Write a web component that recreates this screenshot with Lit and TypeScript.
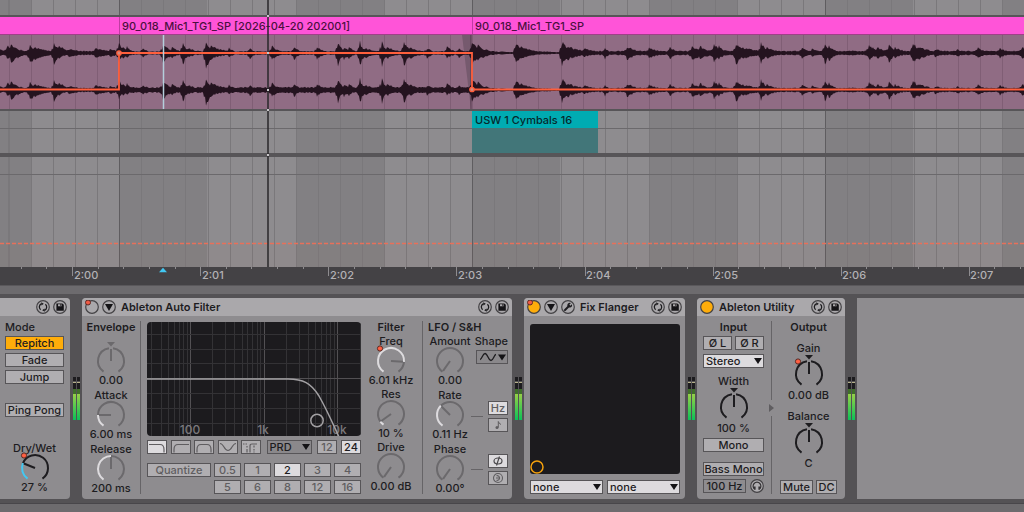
import { LitElement, html, svg, css, nothing } from "lit";
import { customElement, property } from "lit/decorators.js";
import { classMap } from "lit/directives/class-map.js";

/** Point on a circle; 0 degrees is straight up, clockwise. */
const polar = (cx: number, cy: number, r: number, deg: number) => {
  const a = ((deg - 90) * Math.PI) / 180;
  return [cx + r * Math.cos(a), cy + r * Math.sin(a)].map((n) => n.toFixed(2));
};

const arc = (cx: number, cy: number, r: number, from: number, to: number) => {
  const [x1, y1] = polar(cx, cy, r, from);
  const [x2, y2] = polar(cx, cy, r, to);
  return `M${x1} ${y1}A${r} ${r} 0 ${to - from > 180 ? 1 : 0} 1 ${x2} ${y2}`;
};

@customElement("dial-knob")
class DialKnob extends LitElement {
  @property() label = "";
  @property() text = "";
  @property() accent = "#dddbde";
  /** Needle angle from -145 to 145. */
  @property({ type: Number }) angle = 0;
  @property({ type: Boolean }) bipolar = false;
  @property({ type: Boolean }) active = false;
  @property({ type: Boolean }) mapped = false;
  @property({ type: Boolean }) hidelabel = false;

  static styles = css`
    :host {
      display: flex;
      flex-direction: column;
      align-items: center;
      line-height: 14px;
      white-space: nowrap;
    }
    .dial {
      position: relative;
      display: flex;
    }
    svg {
      display: block;
      overflow: visible;
    }
    input {
      position: absolute;
      inset: 0;
      width: 100%;
      height: 100%;
      margin: 0;
      opacity: 0;
    }
    .value {
      display: block;
    }
    .spaced {
      padding-top: 2px;
    }
    .bare {
      padding-top: 8px;
    }
  `;

  render() {
    const cy = this.bipolar ? 19 : 13;
    const h = this.bipolar ? 31 : 25;
    const color = this.active ? "#1d1c1f" : "#6b696c";
    const [nx, ny] = polar(15, cy, 12, this.angle);
    return html`
      ${this.hidelabel ? nothing : html`<label for="dial">${this.label}</label>`}
      <div class=${classMap({ dial: true, bare: this.hidelabel })}>
        <svg width="30" height=${h} viewBox="0 0 30 ${h}" fill="none" stroke-width="2">
          ${this.bipolar
            ? svg`<path d="M11 0h8l-4 4.500z" fill=${color} />
                <path d=${arc(15, cy, 13, -145, -9)} stroke=${color} />
                <path d=${arc(15, cy, 13, 9, 145)} stroke=${color} />`
            : svg`<path d=${arc(15, cy, 13, this.angle, 145)} stroke=${color} />
                ${this.angle > -145
                  ? svg`<path d=${arc(15, cy, 13, -145, this.angle)} stroke=${this.accent} />`
                  : nothing}`}
          <path d="M15 ${cy}L${nx} ${ny}" stroke=${color} />
          ${this.mapped
            ? svg`<circle cx="4" cy=${cy - 12.5} r="2.600" fill="#ff5f42" stroke="#5a2a24" stroke-width="1" />`
            : nothing}
        </svg>
        <input id="dial" type="range" min="-145" max="145" .value=${String(this.angle)} aria-label=${this.label} />
      </div>
      <span class=${classMap({ value: true, spaced: this.bipolar && !this.hidelabel })}>${this.text}</span>
    `;
  }
}

/* ---------- icons ---------- */
const swapIcon = svg`<circle cx="7" cy="7" r="6.300" fill="none" stroke="#444245" stroke-width="1.200"/>
  <g fill="none" stroke="#1d1c1f" stroke-width="1.300"><path d="M4.600 9.800A3.600 3.600 0 0 1 5.600 3.700"/><path d="M9.400 4.200A3.600 3.600 0 0 1 8.400 10.300"/></g>
  <path d="M5.200 2.300l2.600 1.400-2.300 1.800zM8.800 11.700L6.200 10.300l2.300-1.800z" fill="#1d1c1f"/>`;
const saveIcon = svg`<circle cx="7" cy="7" r="6.300" fill="none" stroke="#444245" stroke-width="1.200"/>
  <path d="M3.400 3.400h6l1.400 1.400v6H3.400z" fill="#141316"/><path d="M5 4.200h3.600v2H5z" fill="#aaa8ab"/><path d="M7.200 4.200h1v1.500h-1z" fill="#141316"/>`;
const foldIcon = svg`<circle cx="7" cy="7" r="6.300" fill="none" stroke="#444245" stroke-width="1.200"/>
  <path d="M3 4h8L7 11z" fill="#141316"/>`;
const wrenchIcon = svg`<circle cx="7" cy="7" r="6.300" fill="none" stroke="#444245" stroke-width="1.200"/>
  <path d="M4 10L8 6" stroke="#1d1c1f" stroke-width="2" stroke-linecap="round"/>
  <path d="M9.900 3.100L8.300 4.700l1 1 1.600-1.500a2.400 2.400 0 1 1-1-1.100z" fill="#1d1c1f"/>`;
const headIcon = svg`<circle cx="7" cy="7" r="6.300" fill="#b0aeb1" stroke="#444245" stroke-width="1.200"/>
  <path d="M4.800 10.300A3.900 3.900 0 1 1 9.200 10.300" fill="none" stroke="#333134" stroke-width="1.200"/>
  <path d="M3.600 7.500h2v3.200h-1.200zM10.400 7.500h-2v3.200h1.200z" fill="#333134"/>`;

const icon = (name: string, shape: unknown) => html`
  <button class="round" aria-label=${name}><svg width="14" height="14" viewBox="0 0 14 14">${shape}</svg></button>
`;

/* ---------- timeline data ---------- */
const BEAT = 88.25;
const BAR_START = 119.3;
const TIMES = ["2:00", "2:01", "2:02", "2:03", "2:04", "2:05", "2:06", "2:07"];

/** Transients: x, height above the centre, depth below it, decay length. */
const HITS: number[][] = [
  [-2, 3, 2, 8], [7, 7, 5, 7], [11, 7, 9, 8], [30, 7, 11, 6], [34, 5, 6, 12], [54, 8, 10, 5], [59, 6, 4, 8], [69, 3, 3, 10], [95, 4, 4, 12], [110, 3, 3, 8],
  [119, 11, 9, 3], [123, 6, 5, 4], [127, 6, 4, 3], [143, 4, 3, 3], [163, 7, 8, 7], [172, 5, 4, 6], [183, 9, 11, 3], [188, 4, 3, 8],
  [206, 9, 15, 5], [211, 6, 5, 12], [229, 4, 3, 4], [250, 4, 6, 3], [272, 6, 6, 5], [294, 6, 6, 4], [317, 5, 5, 5],
  [338, 9, 11, 4], [344, 5, 6, 6], [349, 6, 5, 4], [360, 10, 13, 3], [365, 4, 4, 8], [382, 11, 13, 3], [387, 6, 5, 7], [404, 11, 12, 4],
  [410, 5, 5, 7], [427, 4, 4, 4], [447, 5, 4, 6], [459, 4, 4, 3],
  [472, 10, 10, 7], [478, 7, 7, 7], [516, 10, 10, 6], [521, 6, 5, 9], [562, 10, 11, 7], [568, 6, 6, 12], [584, 4, 3, 8], [605, 4, 5, 3],
  [627, 6, 6, 8], [649, 4, 4, 8], [670, 5, 5, 5], [692, 6, 7, 9], [700, 6, 6, 8], [714, 8, 8, 6], [719, 7, 6, 4],
  [736, 9, 11, 6], [742, 5, 5, 14], [761, 9, 9, 5], [767, 5, 5, 8], [802, 4, 4, 5], [812, 4, 3, 5],
  [825, 10, 11, 3], [829, 6, 7, 5], [869, 7, 6, 7], [877, 5, 5, 7], [889, 9, 10, 4], [895, 5, 4, 7], [913, 10, 10, 6], [919, 5, 5, 10],
  [935, 3, 3, 10], [957, 3, 3, 5], [978, 5, 5, 5], [1000, 4, 4, 6], [1022, 5, 5, 8],
];

const noise = (n: number) => {
  const v = Math.sin(n * 127.1) * 43758.5453;
  return v - Math.floor(v);
};

const wavePath = (cy: number, seed: number, floor: number) => {
  const side = (col: number, sign: number) => {
    const points: string[] = [];
    for (let x = 0; x <= 1026; x += 1) {
      let a = x > 472 && x < 560 ? 1 : x > 119 && x < 472 ? floor : 2;
      for (const hit of HITS) {
        const d = x - hit[0];
        if (d >= -2 && d < hit[3] * 4) a = Math.max(a, 1 + hit[col] * (d < 0 ? 0.4 : Math.exp(-d / hit[3])));
      }
      const grain = a > 3 ? 0.75 + 0.4 * noise(x + seed * col) : 0.7 + 0.5 * noise(x + seed);
      points.push(`${x} ${(cy + sign * a * grain).toFixed(1)}`);
    }
    return points;
  };
  return `M${side(1, -1).join("L")}L${side(2, 1).reverse().join("L")}Z`;
};

const WAVES = wavePath(18, 3, 1.7) + wavePath(55, 3, 2.7);

@customElement("app-root")
class AppRoot extends LitElement {
  static styles = css`
    :host {
      display: block;
      font-family: Inter, "Open Sans", sans-serif;
      font-size: 11px;
      font-weight: 500;
      line-height: 14px;
      color: #1d1c1f;
      --edge: #575558;
      --panel: #8e8c8f;
      --key: #b0aeb1;
    }
    * {
      box-sizing: border-box;
    }
    main {
      display: flex;
      flex-direction: column;
      min-height: 100vh;
      overflow: hidden;
      background: #6d6b6e;
    }
    svg {
      display: block;
    }
    h2,
    h3 {
      margin: 0;
      font-size: 11px;
      font-weight: 600;
      white-space: nowrap;
    }

    /* arrangement */
    .arrange {
      position: relative;
      overflow: hidden;
      background: #8e8c8f;
    }
    .beats,
    .cursor {
      position: absolute;
      inset: 0;
      width: 100%;
      height: 100%;
    }
    .track {
      position: relative;
      border-bottom: 2px solid var(--edge);
    }
    .strip {
      height: 17px;
    }
    .clips {
      display: grid;
      grid-template-columns: 119px 353px 1fr;
      height: 18px;
      border-bottom: 1px solid #a04088;
    }
    .clip {
      padding: 1px 3px;
      overflow: hidden;
      background: #ff54d8;
      color: #4b103e;
      line-height: 16px;
      white-space: nowrap;
    }
    .clip + .clip {
      border-left: 1px solid #c03ca2;
      padding-left: 2px;
    }
    .wave {
      height: 74px;
      overflow: hidden;
      background: #906c84;
    }
    .midi {
      display: grid;
      grid-template-columns: 472px 126px 1fr;
      height: 46px;
      border-bottom-width: 4px;
    }
    .cymbals {
      background: #427679;
    }
    .cymbals h3 {
      height: 17px;
      padding-left: 3px;
      background: #00abb2;
      color: #06292c;
      font-weight: 500;
      line-height: 18px;
    }
    .lane {
      height: 110px;
      border: 0;
    }
    .ruler {
      position: relative;
      height: 19px;
      background: #444245;
      border-bottom: 1px solid #5a585b;
    }
    .ticks {
      position: absolute;
      inset: 0;
      width: 100%;
      height: 100%;
    }
    .times {
      display: grid;
      grid-auto-flow: column;
      grid-auto-columns: 128px;
      margin: 0;
      padding: 1px 0 0 74px;
      list-style: none;
      color: #b3b1b4;
      line-height: 15px;
    }

    /* device chain */
    .rack {
      display: flex;
      margin-top: 8px;
      padding: 4px 0;
      background: #545255;
      border-bottom: 1px solid #48464a;
    }
    .device {
      display: flex;
      flex-direction: column;
      flex: none;
      overflow: hidden;
      border-radius: 4px;
      background: var(--panel);
    }
    .echo {
      width: 70px;
      border-top-left-radius: 0;
      border-bottom-left-radius: 0;
    }
    .filter {
      width: 430px;
    }
    .flanger {
      width: 161px;
    }
    .utility {
      width: 148px;
    }
    .empty {
      flex: 1;
      background: var(--panel);
    }
    .bar {
      display: flex;
      align-items: center;
      gap: 3px;
      height: 18px;
      padding: 0 3px;
      background: #aaa8ab;
    }
    .bar h2 {
      flex: 1;
      padding-left: 2px;
    }
    button,
    select {
      margin: 0;
      font: inherit;
      color: inherit;
    }
    .round {
      display: block;
      width: 14px;
      height: 14px;
      padding: 0;
      border: 0;
      background: none;
    }
    .body {
      display: flex;
      flex: 1;
      min-height: 183px;
    }
    .key {
      display: flex;
      align-items: center;
      justify-content: center;
      height: 14px;
      padding: 0;
      border: 1px solid var(--edge);
      background: var(--key);
      line-height: 12px;
      white-space: nowrap;
    }
    .lit {
      background: #ffad0a;
    }
    .on {
      background: #dddbde;
    }
    .dim {
      color: #5f5d60;
    }
    .dark {
      background: #8e8c8f;
    }
    .pick {
      position: relative;
      display: flex;
    }
    .pick select {
      width: 100%;
      height: 14px;
      padding: 0 2px;
      appearance: none;
      border: 1px solid var(--edge);
      border-radius: 0;
      background: #dddbde;
      line-height: 12px;
    }
    .pick svg {
      position: absolute;
      top: 4px;
      right: 2px;
      pointer-events: none;
    }
    .pick .shade {
      background: #8a888b;
    }
    .pick .wide {
      right: 2px;
      top: 1px;
    }
    .pick .blank {
      color: transparent;
    }
    .rule {
      flex: none;
      width: 1px;
      margin: 5px 0;
      background: #666467;
    }
    .echo .body {
      flex-direction: column;
      padding: 4px 6px 5px 5px;
    }
    .modes {
      display: grid;
      gap: 3px;
      padding-bottom: 19px;
    }
    .modes span {
      margin-bottom: -1px;
    }
    .grow {
      flex: 1;
    }
    .meter {
      display: flex;
      flex: none;
      gap: 1px;
      justify-content: center;
      align-items: flex-start;
      width: 12px;
      padding-top: 79px;
    }
    .meter i {
      width: 3px;
      height: 43px;
      background: linear-gradient(#1d1c1f 0 4px, #545255 4px 5px, #b5b08a 5px 6px, #1d1c1f 6px 12px, #3f6f2a 12px 17px, #97d048 17px, #0cc257 43px);
    }
    .stack {
      display: flex;
      flex-direction: column;
      padding-top: 4px;
      text-align: center;
    }
    .env {
      width: 58px;
      gap: 1px;
    }
    .env h3 {
      margin-bottom: -1px;
    }
    .spectrum {
      display: flex;
      flex-direction: column;
      width: 226px;
      padding: 6px 6px 5px;
    }
    .graph {
      width: 214px;
      height: 114px;
      margin-bottom: 4px;
      border-radius: 4px;
      background: #1c1b1e;
    }
    .types {
      display: flex;
      justify-content: space-between;
      margin-bottom: 9px;
    }
    .group {
      display: flex;
      justify-content: space-between;
    }
    .five {
      width: 114px;
    }
    .two {
      width: 44px;
    }
    .group .key {
      width: 20px;
    }
    .circuit {
      width: 45px;
    }
    .steps {
      display: grid;
      grid-template-columns: 64px repeat(5, 27px);
      gap: 3px;
    }
    .six {
      grid-column: 2;
    }
    .main {
      width: 55px;
      padding-right: 7px;
    }
    .lfo {
      flex: 1;
      padding: 4px 4px 0 5px;
    }
    .lfo h3 {
      text-align: left;
    }
    .split {
      display: grid;
      grid-template-columns: 44px 32px;
      justify-content: space-between;
    }
    .dials {
      display: grid;
      gap: 1px;
    }
    .side {
      display: flex;
      flex-direction: column;
      align-items: flex-end;
    }
    .side .pick {
      width: 32px;
      margin: 2px 0 37px;
    }
    .pair {
      display: grid;
      grid-template-columns: 12px 20px;
      column-gap: 5px;
      align-items: center;
      row-gap: 3px;
      margin-bottom: 22px;
    }
    .pair:last-child {
      margin-bottom: 0;
    }
    .dash {
      grid-row: 1 / 3;
      height: 1px;
      background: #666467;
    }
    .pair .key {
      grid-column: 2;
    }
    .flanger .body {
      flex-direction: column;
      gap: 6px;
      padding: 8px 5px 5px 6px;
    }
    .pad {
      height: 150px;
      border-radius: 3px;
      background: #1c1b1e;
    }
    .drops {
      display: grid;
      grid-template-columns: 1fr 1fr;
      gap: 4px;
    }
    .input {
      width: 72px;
      padding: 4px 5px 5px 6px;
    }
    .flip {
      display: grid;
      grid-template-columns: 1fr 1fr;
      gap: 3px;
      margin: 2px 0 4px;
    }
    .input .pick {
      margin-bottom: 6px;
    }
    .mono {
      margin-top: 3px;
      margin-bottom: 10px;
    }
    .bass {
      display: grid;
      grid-template-columns: 43px 14px;
      justify-content: space-between;
      margin-top: 3px;
    }
    .flow {
      display: flex;
      flex-direction: column;
      align-items: center;
      width: 5px;
      margin: 5px 0;
    }
    .flow span {
      flex: 1;
      width: 1px;
      background: #666467;
    }
    .flow svg {
      margin: 4px 0;
    }
    .output {
      flex: 1;
      padding: 4px 8px 5px 6px;
    }
    .output dial-knob {
      margin-top: 7px;
    }
    .ends {
      display: grid;
      grid-template-columns: 33px 21px;
      justify-content: space-between;
    }
  `;

  private beats() {
    const lines = [];
    for (let i = -6; i < 120; i++) {
      const x = Math.round(BAR_START + (i * BEAT) / 4);
      const strong = i % 16 === 0;
      if (i % 8 === 0)
        lines.push(svg`<rect x=${x} width=${Math.round(BEAT)} height="100%" fill="#828083" />`);
      lines.push(svg`<rect x=${x} width="1" height="100%" fill=${strong ? "#5f5d60" : "#7a787b"} />`);
    }
    return svg`<rect width="31" height="100%" fill="#828083" /><rect x="8" width="1" height="100%" fill="#7a787b" />${lines}
      <path d="M0 128.500H4000M0 174.500H4000" stroke="#6b696c" />
      <rect y="244" width="100%" height="23" fill="#b05040" opacity=".03" />
      <path d="M0 243.500H4000" stroke="#e8705a" stroke-width="1.400" stroke-dasharray="4 2" />`;
  }

  private ticks() {
    const marks = [];
    for (let i = -2; i < 120; i++) {
      const x = Math.round(72.1 + i * 25.62);
      marks.push(svg`<rect x=${x} width="1" height=${i % 5 === 0 ? 9 : 2} fill="#8e8c8f" />`);
    }
    return marks;
  }

  private waveLines() {
    const x: unknown[] = [];
    for (let i = -5; i < 120; i++) {
      const at = Math.round(BAR_START + (i * BEAT) / 4);
      x.push(svg`<rect x=${at} width="1" height="74" fill="#805e75" />`);
    }
    return x;
  }

  private graph() {
    const lines = [];
    for (let decade = 1; decade < 5; decade++)
      for (let n = 1; n < 10; n++) {
        const x = Math.round(43 + (decade + Math.log10(n) - 2) * 73.7);
        if (x > 0 && x < 214)
          lines.push(svg`<path d="M${x + 0.5} 0V114" stroke=${n === 1 ? "#525053" : "#333235"} />`);
      }
    return svg`${lines}
      <path d="M0 12.500H214M0 27.500H214M0 41.500H214M0 71.500H214M0 86.500H214M0 101.500H214" stroke="#333235" />
      <path d="M0 56.500H214" stroke="#525053" />
      <g fill="#7b797c" font-size="12" text-anchor="middle"><text x="43" y="112">100</text><text x="116" y="112">1k</text><text x="190" y="112">10k</text></g>
      <path d="M0 57H141C156 57 164 61 172 74C180 88 186 102 192 115" fill="none" stroke="#a3a1a4" stroke-width="1.500" />
      <circle cx="170" cy="98.500" r="6.200" fill="none" stroke="#a3a1a4" stroke-width="1.500" />`;
  }

  private bar(title: string, opts: { power?: string; mapped?: boolean; fold?: boolean; wrench?: boolean }) {
    return html`<header class="bar">
      ${opts.power
        ? icon("Device on", svg`<circle cx="7" cy="7" r="6.300" fill=${opts.power} stroke="#444245" stroke-width="1.200" />
            ${opts.mapped ? svg`<circle cx="3" cy="2.500" r="2.500" fill="#f05a44" stroke="#5a2a24" />` : nothing}`)
        : nothing}
      ${opts.fold ? icon("Fold", foldIcon) : nothing} ${opts.wrench ? icon("Edit", wrenchIcon) : nothing}
      <h2>${title}</h2>
      ${icon("Hot-swap", swapIcon)} ${icon("Save preset", saveIcon)}
    </header>`;
  }

  private key(text: unknown, cls = "", name = "") {
    return html`<button class="key ${cls}" aria-label=${name || nothing}>${text}</button>`;
  }

  private pick(name: string, value: string, cls = "") {
    return html`<div class="pick">
      <select class=${cls} aria-label=${name}><option>${value}</option></select>
      <svg width="8" height="6" viewBox="0 0 8 6"><path d="M0 0h8L4 6z" fill="#141316" /></svg>
    </div>`;
  }

  private glyph(d: string) {
    return html`<svg width="18" height="12" viewBox="0 0 18 12" fill="none" stroke="#5f5d60" stroke-width="1.200"><path d=${d} /></svg>`;
  }

  private meter() {
    return html`<div class="meter"><i></i><i></i></div>`;
  }

  render() {
    return html`<main>
      <section class="arrange">
        <svg class="beats">${this.beats()}</svg>
        <div class="track strip"></div>
        <div class="track">
          <div class="clips">
            <div class="clip"></div>
            <div class="clip">90_018_Mic1_TG1_SP [2026-04-20 202001]</div>
            <div class="clip">90_018_Mic1_TG1_SP</div>
          </div>
          <div class="wave">
            <svg width="100%" height="74">
              ${this.waveLines()}
              <path d="M462 0h9v74z" fill="#765a6e" />
              <path d="M119.500 0V74M471 0V74" stroke="#54384c" />
              <path d=${WAVES} fill="#24131f" />
              <path d="M0 54.500H119V18H472V54.500H4000" fill="none" stroke="#ff5f3c" stroke-width="1.800" />
              <circle cx="119" cy="18" r="2.200" fill="#d08a80" stroke="#ff5f3c" stroke-width="1.300" />
              <circle cx="472" cy="54.500" r="2.200" fill="#d08a80" stroke="#ff5f3c" stroke-width="1.300" />
              <path d="M163.500 0V74" stroke="#b4cfdc" stroke-width="1.500" />
            </svg>
          </div>
        </div>
        <div class="track midi">
          <span></span>
          <div class="cymbals"><h3>USW 1 Cymbals 16</h3></div>
        </div>
        <div class="track lane"></div>
        <svg class="cursor">
          <path d="M268 0V267" stroke="#29272a" stroke-width="1.500" />
          <path d="M267 15h2v2h-2zM267 52h2v2h-2zM267 89h2v2h-2zM267 109h2v2h-2zM267 154h2v2h-2z" fill="#c9c7ca" />
        </svg>
      </section>
      <div class="ruler">
        <svg class="ticks">${this.ticks()}<path d="M159 5.300h8L163 .8z" fill="#42c8f2" /></svg>
        <ol class="times">${TIMES.map((t) => html`<li>${t}</li>`)}</ol>
      </div>

      <section class="rack">
        <article class="device echo">
          ${this.bar("", {})}
          <div class="body">
            <div class="modes">
              <span>Mode</span>
              ${this.key("Repitch", "lit")} ${this.key("Fade")} ${this.key("Jump")}
            </div>
            ${this.key("Ping Pong")}
            <span class="grow"></span>
            <dial-knob label="Dry/Wet" text="27 %" angle="-68" accent="#42c8f2" active mapped></dial-knob>
          </div>
        </article>
        ${this.meter()}

        <article class="device filter">
          ${this.bar("Ableton Auto Filter", { power: "#aaa8ab", mapped: true, fold: true })}
          <div class="body">
            <div class="stack env">
              <h3>Envelope</h3>
              <dial-knob label="Envelope amount" text="0.00" bipolar hidelabel></dial-knob>
              <dial-knob label="Attack" text="6.00 ms" angle="-90"></dial-knob>
              <dial-knob label="Release" text="200 ms" angle="0"></dial-knob>
            </div>
            <div class="rule"></div>
            <div class="spectrum">
              <svg class="graph" viewBox="0 0 214 114">${this.graph()}</svg>
              <div class="types">
                <div class="group five">
                  ${this.key(this.glyph("M1 3.500h11q4 0 4 5v3"), "on", "Low-pass")}
                  ${this.key(this.glyph("M2 11.500v-3q0-5 4-5h11"), "dim", "High-pass")}
                  ${this.key(this.glyph("M2 11.500v-3q0-5 4-5h6q4 0 4 5v3"), "dim", "Band-pass")}
                  ${this.key(this.glyph("M1 2.500c4 0 4 7 8 7s4-7 8-7"), "dim", "Notch")}
                  ${this.key(this.glyph("M1 3h1.500M3.500 3h1.500M5 5v1.500M5 11.500V8M8 11.500V5q0-2 2-2h5M12 4.500v2M12 8v1.500M12 10.500v1"), "dim", "Morph")}
                </div>
                <div class="circuit">${this.pick("Circuit", "PRD", "shade")}</div>
                <div class="group two">${this.key("12", "dim")} ${this.key("24", "on")}</div>
              </div>
              <div class="steps">
                ${this.key("Quantize", "dim")} ${this.key("0.5", "dim")} ${this.key("1", "dim")}
                ${this.key("2", "on")} ${this.key("3", "dim")} ${this.key("4", "dim")}
                ${this.key("5", "dim six")} ${this.key("6", "dim")} ${this.key("8", "dim")}
                ${this.key("12", "dim")} ${this.key("16", "dim")}
              </div>
            </div>
            <div class="stack main">
              <h3>Filter</h3>
              <dial-knob label="Freq" text="6.01 kHz" angle="94" mapped></dial-knob>
              <dial-knob label="Res" text="10 %" angle="-126"></dial-knob>
              <dial-knob label="Drive" text="0.00 dB" angle="-145"></dial-knob>
            </div>
            <div class="rule"></div>
            <div class="stack lfo">
              <h3>LFO / S&amp;H</h3>
              <div class="split">
                <div class="dials">
                  <dial-knob label="Amount" text="0.00" angle="-145"></dial-knob>
                  <dial-knob label="Rate" text="0.11 Hz" angle="-45"></dial-knob>
                  <dial-knob label="Phase" text="0.00°" angle="-145"></dial-knob>
                </div>
                <div class="side">
                  <label for="shape">Shape</label>
                  <div class="pick">
                    <select id="shape" class="shade blank"><option>Sine</option></select>
                    <svg class="wide" width="27" height="12" viewBox="0 0 27 12">
                      <path d="M1 8.500C3 8.500 3.500 2.500 6 2.500S9.500 9.500 12 9.500 15 3.500 17 3.500" fill="none" stroke="#1d1c1f" stroke-width="1.300" />
                      <path d="M19 3.500h8l-4 6z" fill="#141316" />
                    </svg>
                  </div>
                  <div class="pair">
                    <span class="dash"></span>
                    ${this.key("Hz", "on dim")}
                    ${this.key(html`<svg width="10" height="12" viewBox="0 0 10 12"><circle cx="4" cy="8.500" r="1.500" fill="#5f5d60" /><path d="M5.300 8.500V2.500q.5 2 2.700 3" fill="none" stroke="#5f5d60" /></svg>`, "", "Synced rate")}
                  </div>
                  <div class="pair">
                    <span class="dash"></span>
                    ${this.key(html`<svg width="12" height="12" viewBox="0 0 12 12" fill="none" stroke="#4a484b" stroke-width="1.200"><ellipse cx="6" cy="6" rx="4" ry="3" /><path d="M7.500 1.500l-3 9" /></svg>`, "on", "Phase")}
                    ${this.key(html`<svg width="12" height="12" viewBox="0 0 12 12" fill="none" stroke="#5f5d60" stroke-width="1.100"><circle cx="6" cy="6" r="4.500" /><path d="M4.500 3.700A2.400 2.400 0 1 1 4.500 8.300M4 6h3" /></svg>`, "", "Spin")}
                  </div>
                </div>
              </div>
            </div>
          </div>
        </article>
        ${this.meter()}

        <article class="device flanger">
          ${this.bar("Fix Flanger", { power: "#ffad0a", mapped: true, fold: true, wrench: true })}
          <div class="body">
            <div class="pad">
              <svg width="150" height="150"><circle cx="7" cy="143" r="6" fill="none" stroke="#f5a10c" stroke-width="1.500" /></svg>
            </div>
            <div class="drops">${this.pick("X parameter", "none")} ${this.pick("Y parameter", "none")}</div>
          </div>
        </article>
        ${this.meter()}

        <article class="device utility">
          ${this.bar("Ableton Utility", { power: "#ffad0a" })}
          <div class="body">
            <div class="stack input">
              <h3>Input</h3>
              <div class="flip">${this.key("Ø L")} ${this.key("Ø R")}</div>
              ${this.pick("Channel mode", "Stereo")}
              <dial-knob label="Width" text="100 %" bipolar active></dial-knob>
              ${this.key("Mono", "mono")} ${this.key("Bass Mono")}
              <div class="bass">${this.key("100 Hz", "dark")} ${icon("Audition bass", headIcon)}</div>
            </div>
            <div class="flow">
              <span></span>
              <svg width="5" height="8" viewBox="0 0 5 8"><path d="M0 0v8l5-4z" fill="#5f5d60" /></svg>
              <span></span>
            </div>
            <div class="stack output">
              <h3>Output</h3>
              <dial-knob label="Gain" text="0.00 dB" bipolar active mapped></dial-knob>
              <dial-knob label="Balance" text="C" bipolar active></dial-knob>
              <span class="grow"></span>
              <div class="ends">${this.key("Mute")} ${this.key("DC")}</div>
            </div>
          </div>
        </article>
        ${this.meter()}
        <div class="empty"></div>
      </section>
    </main>`;
  }
}
